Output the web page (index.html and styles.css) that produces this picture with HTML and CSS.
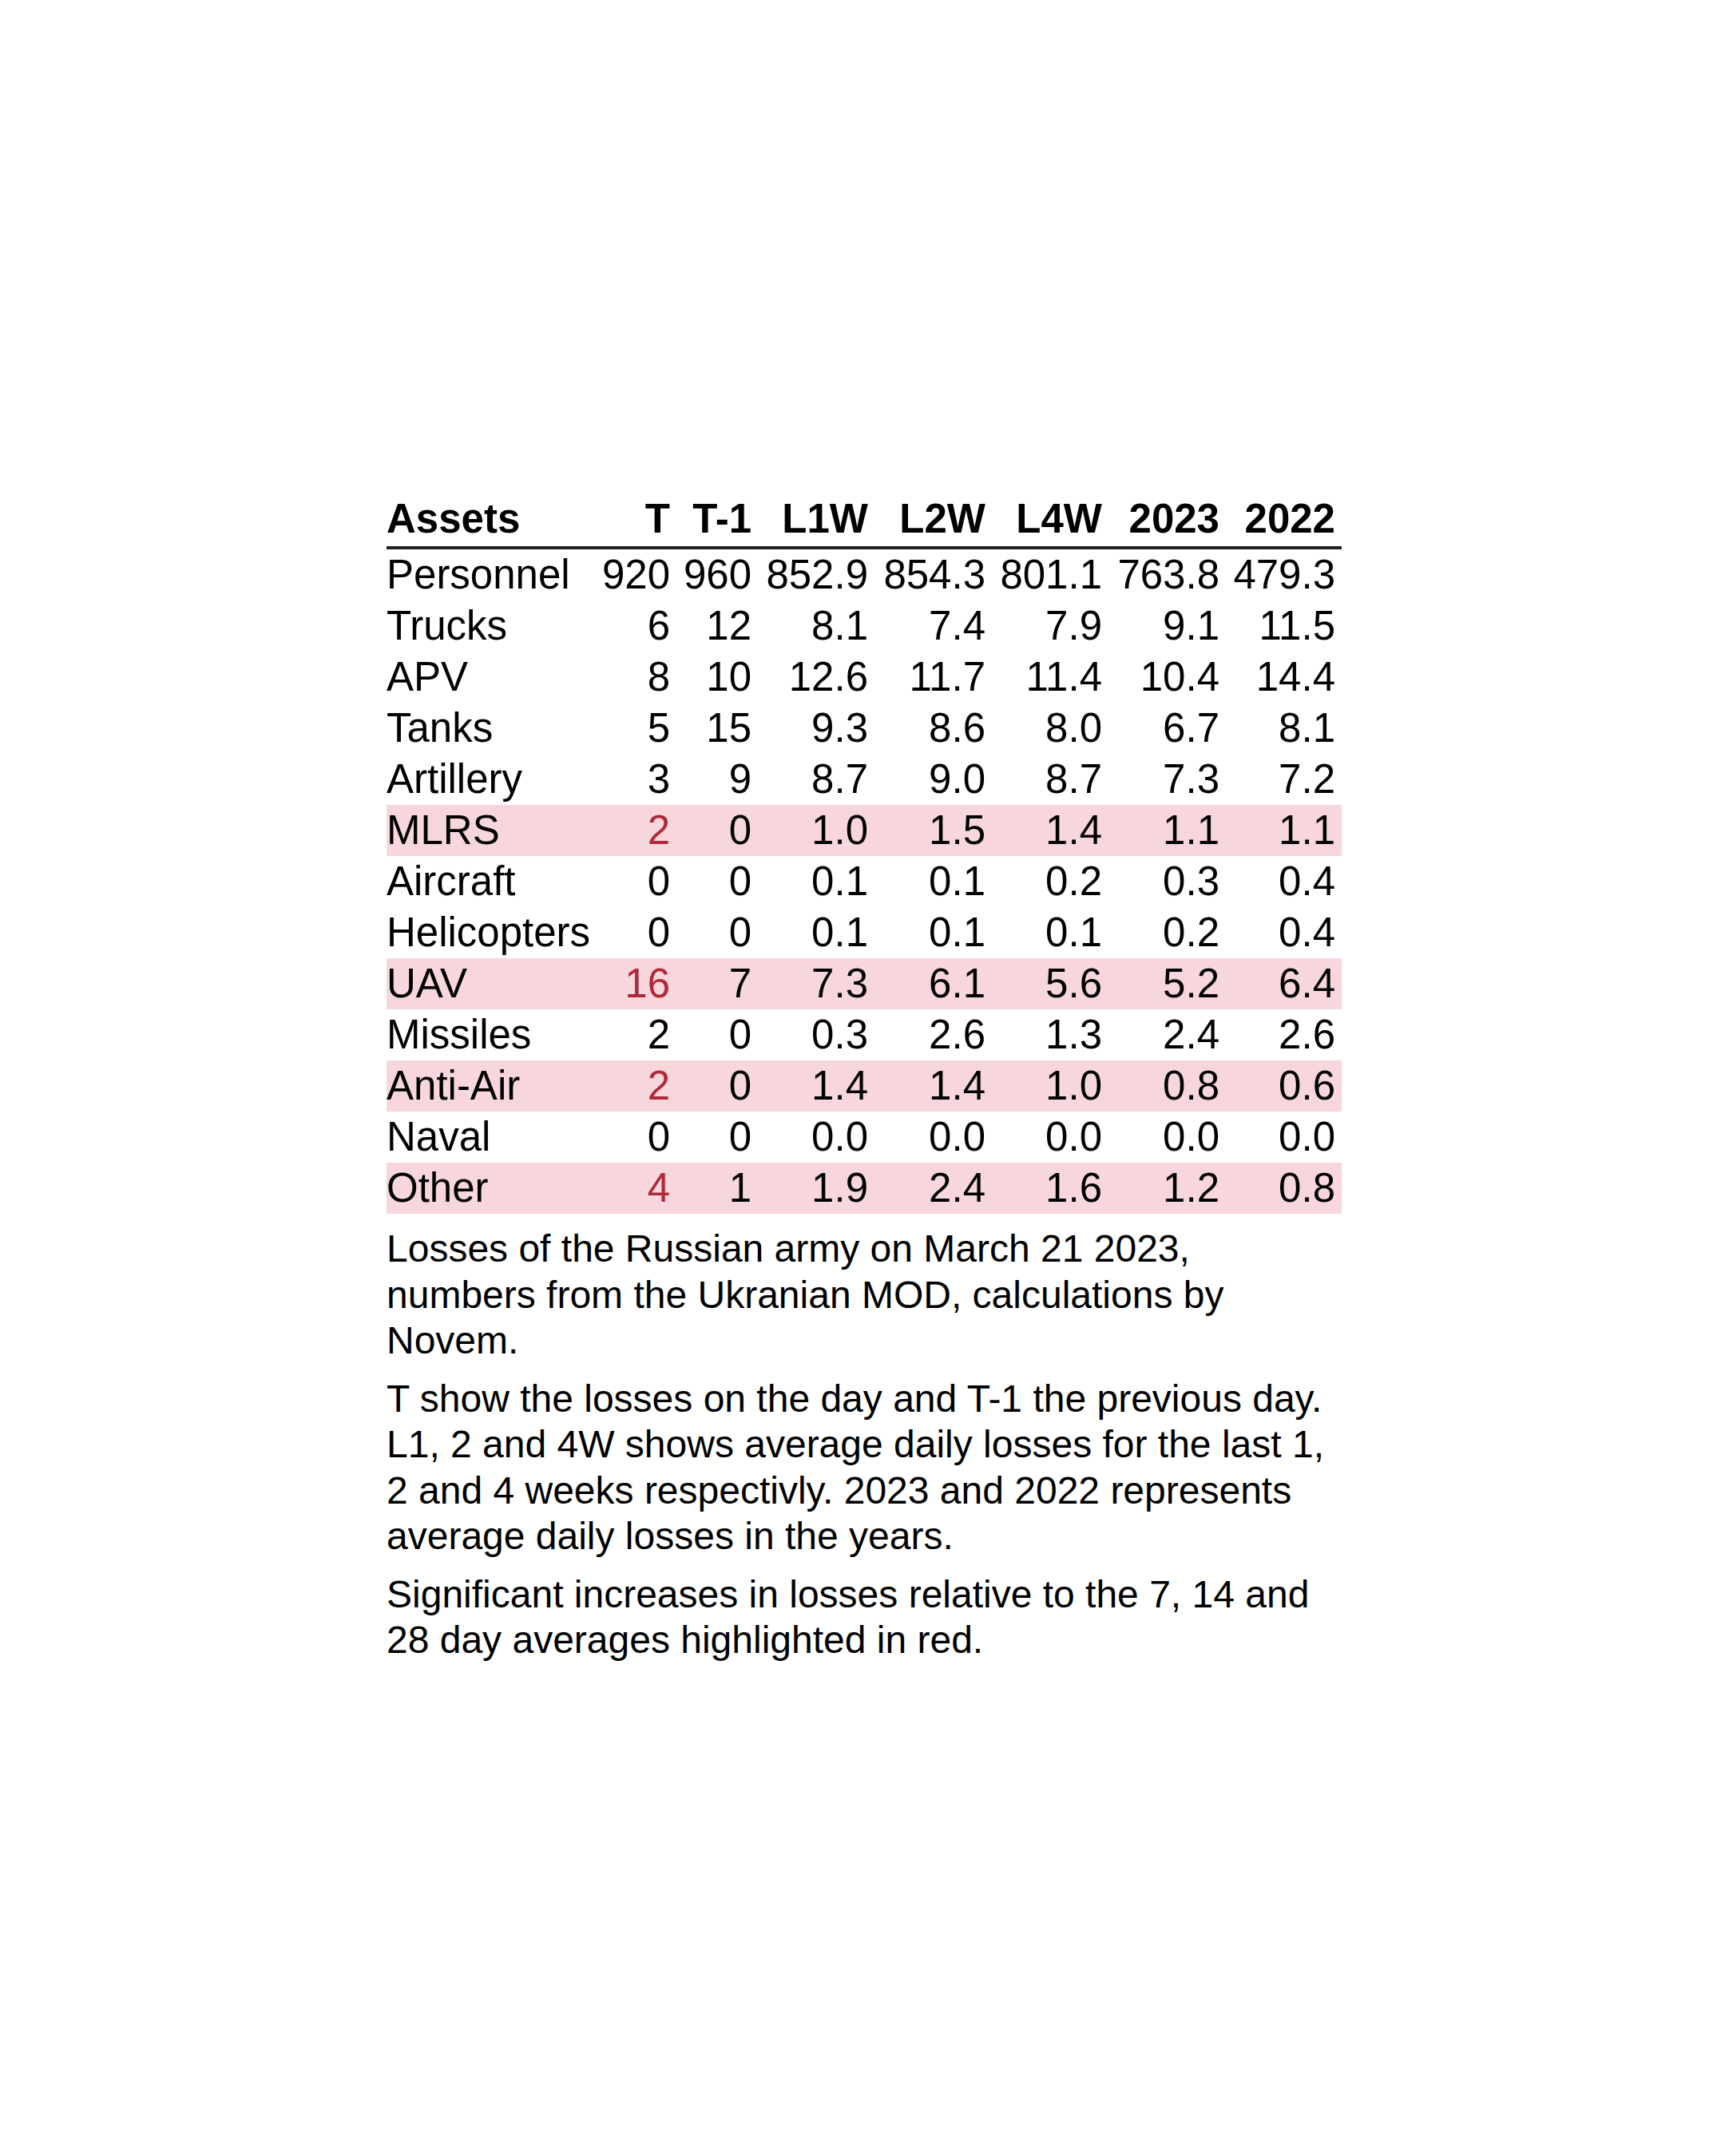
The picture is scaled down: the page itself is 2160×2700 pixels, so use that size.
FILE: index.html
```html
<!DOCTYPE html>
<html lang="en">
<head>
<meta charset="utf-8">
<title>Losses of the Russian army</title>
<link rel="stylesheet" href="styles.css">
</head>
<body>
<main class="report">
  <table class="losses">
    <colgroup>
      <col class="c-name"><col class="c-t"><col class="c-t1"><col class="c-num"><col class="c-num2"><col class="c-num"><col class="c-num2"><col class="c-last">
    </colgroup>
    <thead>
      <tr><th class="name">Assets</th><th>T</th><th>T-1</th><th>L1W</th><th>L2W</th><th>L4W</th><th>2023</th><th class="last">2022</th></tr>
    </thead>
    <tbody>
      <tr><td class="name">Personnel</td><td>920</td><td>960</td><td>852.9</td><td>854.3</td><td>801.1</td><td>763.8</td><td class="last">479.3</td></tr>
      <tr><td class="name">Trucks</td><td>6</td><td>12</td><td>8.1</td><td>7.4</td><td>7.9</td><td>9.1</td><td class="last">11.5</td></tr>
      <tr><td class="name">APV</td><td>8</td><td>10</td><td>12.6</td><td>11.7</td><td>11.4</td><td>10.4</td><td class="last">14.4</td></tr>
      <tr><td class="name">Tanks</td><td>5</td><td>15</td><td>9.3</td><td>8.6</td><td>8.0</td><td>6.7</td><td class="last">8.1</td></tr>
      <tr><td class="name">Artillery</td><td>3</td><td>9</td><td>8.7</td><td>9.0</td><td>8.7</td><td>7.3</td><td class="last">7.2</td></tr>
      <tr class="hl"><td class="name">MLRS</td><td class="up">2</td><td>0</td><td>1.0</td><td>1.5</td><td>1.4</td><td>1.1</td><td class="last">1.1</td></tr>
      <tr><td class="name">Aircraft</td><td>0</td><td>0</td><td>0.1</td><td>0.1</td><td>0.2</td><td>0.3</td><td class="last">0.4</td></tr>
      <tr><td class="name">Helicopters</td><td>0</td><td>0</td><td>0.1</td><td>0.1</td><td>0.1</td><td>0.2</td><td class="last">0.4</td></tr>
      <tr class="hl"><td class="name">UAV</td><td class="up">16</td><td>7</td><td>7.3</td><td>6.1</td><td>5.6</td><td>5.2</td><td class="last">6.4</td></tr>
      <tr><td class="name">Missiles</td><td>2</td><td>0</td><td>0.3</td><td>2.6</td><td>1.3</td><td>2.4</td><td class="last">2.6</td></tr>
      <tr class="hl"><td class="name">Anti-Air</td><td class="up">2</td><td>0</td><td>1.4</td><td>1.4</td><td>1.0</td><td>0.8</td><td class="last">0.6</td></tr>
      <tr><td class="name">Naval</td><td>0</td><td>0</td><td>0.0</td><td>0.0</td><td>0.0</td><td>0.0</td><td class="last">0.0</td></tr>
      <tr class="hl"><td class="name">Other</td><td class="up">4</td><td>1</td><td>1.9</td><td>2.4</td><td>1.6</td><td>1.2</td><td class="last">0.8</td></tr>
    </tbody>
  </table>
  <p class="note">Losses of the Russian army on March 21 2023, numbers from the Ukranian MOD, calculations by Novem.</p>
  <p class="note">T show the losses on the day and T-1 the previous day. L1, 2 and 4W shows average daily losses for the last 1, 2 and 4 weeks respectivly. 2023 and 2022 represents average daily losses in the years.</p>
  <p class="note">Significant increases in losses relative to the 7, 14 and 28 day averages highlighted in red.</p>
</main>
</body>
</html>
```

FILE: styles.css
```css
html, body {
  margin: 0;
  padding: 0;
  background: #ffffff;
}

body {
  font-family: "Liberation Sans", Arial, sans-serif;
  color: #000000;
}

.report {
  width: 1196px;
  padding: 618px 0 0 484px;
}

.losses {
  width: 1196px;
  table-layout: fixed;
  border-collapse: separate;
  border-spacing: 0;
  font-size: 51px;
  line-height: 64px;
}

.c-name { width: 270px; }
.c-t { width: 85px; }
.c-t1 { width: 102px; }
.c-num { width: 146px; }
.c-num2 { width: 147px; }
.c-last { width: 153px; }

.losses th,
.losses td {
  padding: 0;
  text-align: right;
  white-space: nowrap;
  font-weight: normal;
}

.losses th {
  font-weight: bold;
  padding-bottom: 2px;
  border-bottom: 4px solid #222222;
}

.losses .name {
  text-align: left;
}

.losses .last {
  padding-right: 8px;
}

.losses tr.hl {
  background: #f7d7dc;
}

.losses .up {
  color: #b0283a;
}

.note {
  margin: 15px 0 0 0;
  font-size: 48px;
  line-height: 57.5px;
}
```
